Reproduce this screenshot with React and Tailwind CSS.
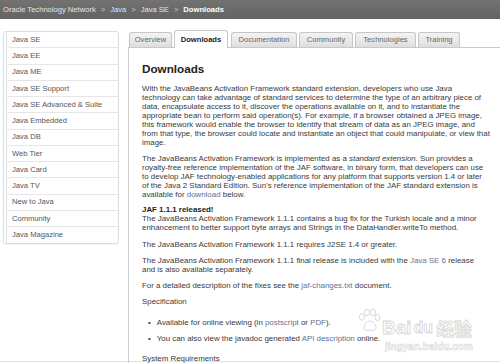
import React from "react";

const side = [
  "Java SE",
  "Java EE",
  "Java ME",
  "Java SE Support",
  "Java SE Advanced & Suite",
  "Java Embedded",
  "Java DB",
  "Web Tier",
  "Java Card",
  "Java TV",
  "New to Java",
  "Community",
  "Java Magazine",
];

const tabs = [
  { t: "Overview", w: "w-[43px]", ml: "ml-[1px]" },
  { t: "Downloads", w: "w-[54px]", ml: "ml-[2px]", active: true },
  { t: "Documentation", w: "w-[66px]", ml: "ml-[3px]" },
  { t: "Community", w: "w-[54px]", ml: "ml-[2px]" },
  { t: "Technologies", w: "w-[61px]", ml: "ml-[2px]" },
  { t: "Training", w: "w-[42px]", ml: "ml-[2px]" },
];

const L = ({ children }) => <span className="text-[#5f7196]">{children}</span>;
const Line = ({ children }) => <span className="block whitespace-nowrap">{children}</span>;
const Sep = () => <span className="mx-[5px] text-[#cfcfcf]">&gt;</span>;

export default function App() {
  return (
    <div className="relative w-[500px] h-[364px] overflow-hidden bg-white font-['Liberation_Sans',Arial,sans-serif]">
      {/* breadcrumb bar */}
      <div className="h-[19px] bg-gradient-to-b from-[#727272] to-[#636363] pl-[3px] text-[7.6px] leading-[19px] text-[#e4e4e4] whitespace-nowrap">
        <span>Oracle Technology Network</span>
        <Sep />
        <span>Java</span>
        <Sep />
        <span>Java SE</span>
        <Sep />
        <span className="font-bold text-white">Downloads</span>
      </div>

      <div className="flex h-[343px] border-b border-[#e2e2e2]">
        {/* sidebar */}
        <div className="w-[128px] shrink-0 pl-[3px] pt-[12px]">
          <div className="w-[116px] border border-[#dcdcdc] rounded-[3px] pl-[2px] text-[7.6px] text-[#555] shadow-[0_1px_1px_rgba(0,0,0,0.05)]">
            {side.map((s, i) => (
              <div
                key={s}
                className={`h-[16.25px] flex items-center pl-[5px] border-l border-[#e0e0e0] ${i < side.length - 1 ? "border-b border-b-[#e6e6e6]" : ""}`}
              >
                {s}
              </div>
            ))}
          </div>
        </div>

        {/* main */}
        <div className="flex-1 flex flex-col pt-[12px]">
          <div className="h-[17px] flex items-end border-b border-[#c9c9c9] shrink-0">
            {tabs.map((tb) =>
              tb.active ? (
                <div
                  key={tb.t}
                  className={`${tb.w} ${tb.ml} h-[18px] -mb-[1px] bg-white border border-b-0 border-[#c9c9c9] rounded-t-[3px] flex items-center justify-center text-[7.6px] font-bold text-[#222]`}
                >
                  {tb.t}
                </div>
              ) : (
                <div
                  key={tb.t}
                  className={`${tb.w} ${tb.ml} h-[15px] bg-gradient-to-b from-[#f4f4f4] to-[#dedede] border border-b-0 border-[#c6c6c6] rounded-t-[3px] flex items-center justify-center text-[7.6px] text-[#666]`}
                >
                  {tb.t}
                </div>
              )
            )}
          </div>

          <div className="flex-1 border-l border-[#cfcfcf] pl-[13px] pt-[14px] text-[7.9px] leading-[9px] text-[#3a3a3a]">
            <h1 className="text-[11.7px] leading-[14px] font-bold text-[#222]">Downloads</h1>
            <p className="mt-[8px]">
              <Line>With the JavaBeans Activation Framework standard extension, developers who use Java</Line>
              <Line>technology can take advantage of standard services to determine the type of an arbitrary piece of</Line>
              <Line>data, encapsulate access to it, discover the operations available on it, and to instantiate the</Line>
              <Line>appropriate bean to perform said operation(s). For example, if a browser obtained a JPEG image,</Line>
              <Line>this framework would enable the browser to identify that stream of data as an JPEG image, and</Line>
              <Line>from that type, the browser could locate and instantiate an object that could manipulate, or view that</Line>
              <Line>image.</Line>
            </p>
            <p className="mt-[7px]">
              <Line>The JavaBeans Activation Framework is implemented as a <i>standard extension</i>. Sun provides a</Line>
              <Line>royalty-free reference implementation of the JAF software, in binary form, that developers can use</Line>
              <Line>to develop JAF technology-enabled applications for any platform that supports version 1.4 or later</Line>
              <Line>of the Java 2 Standard Edition. Sun's reference implementation of the JAF standard extension is</Line>
              <Line>available for <L>download</L> below.</Line>
            </p>
            <p className="mt-[6px]">
              <Line><b className="text-[#222]">JAF 1.1.1 released!</b></Line>
              <Line>The JavaBeans Activation Framework 1.1.1 contains a bug fix for the Turkish locale and a minor</Line>
              <Line>enhancement to better support byte arrays and Strings in the DataHandler.writeTo method.</Line>
            </p>
            <p className="mt-[8px]">
              <Line>The JavaBeans Activation Framework 1.1.1 requires J2SE 1.4 or greater.</Line>
            </p>
            <p className="mt-[7px]">
              <Line>The JavaBeans Activation Framework 1.1.1 final release is included with the <L>Java SE 6</L> release</Line>
              <Line>and is also available separately.</Line>
            </p>
            <p className="mt-[7px]">
              <Line>For a detailed description of the fixes see the <L>jaf-changes.txt</L> document.</Line>
            </p>
            <p className="mt-[7px]">
              <Line>Specification</Line>
            </p>
            <ul className="mt-[12px] pl-[6px]">
              <li className="flex gap-[6px] whitespace-nowrap">
                <span>•</span>
                <span>Available for online viewing (in <L>postscript</L> or <L>PDF</L>).</span>
              </li>
              <li className="flex gap-[6px] whitespace-nowrap mt-[7px]">
                <span>•</span>
                <span>You can also view the javadoc generated <L>API description</L> online.</span>
              </li>
            </ul>
            <p className="mt-[11px]">
              <Line>System Requirements</Line>
            </p>
          </div>
        </div>
      </div>

      {/* watermark */}
      <div className="absolute left-[352px] top-[306px] pointer-events-none select-none">
        <svg width="26" height="24" viewBox="0 0 26 24" className="absolute left-[4px] top-[2px]">
          <g fill="none" stroke="#d9d9d9" strokeWidth="1">
            <ellipse cx="6" cy="9" rx="2.6" ry="3.2" />
            <ellipse cx="11" cy="4.5" rx="2.6" ry="3.2" />
            <ellipse cx="17" cy="4.5" rx="2.6" ry="3.2" />
            <ellipse cx="21.5" cy="9.5" rx="2.4" ry="3" />
            <path d="M8 20c0-4 3-7 6-7s6 3 6 7c0 2-2 3-4 2.4-1.5-.4-2.5-.4-4 0-2 .6-4-.4-4-2.4z" />
          </g>
        </svg>
        <div className="absolute left-[30px] top-[12px] flex items-center whitespace-nowrap font-['Liberation_Sans',sans-serif] font-bold text-[19px] leading-[20px] text-white [-webkit-text-stroke:0.8px_#d6d6d6]">
          <span>Bai</span>
          <span className="ml-[2px] text-[16px]">du</span>
          <span className="ml-[3px] font-['Noto_Sans_CJK_SC',sans-serif] text-[18px]">经验</span>
        </div>
        <div className="absolute left-[33px] top-[36px] whitespace-nowrap font-['Liberation_Sans',sans-serif] font-bold text-[10px] leading-[10px] text-white [-webkit-text-stroke:0.6px_#d9d9d9]">
          jingyan.baidu.com
        </div>
      </div>
    </div>
  );
}
